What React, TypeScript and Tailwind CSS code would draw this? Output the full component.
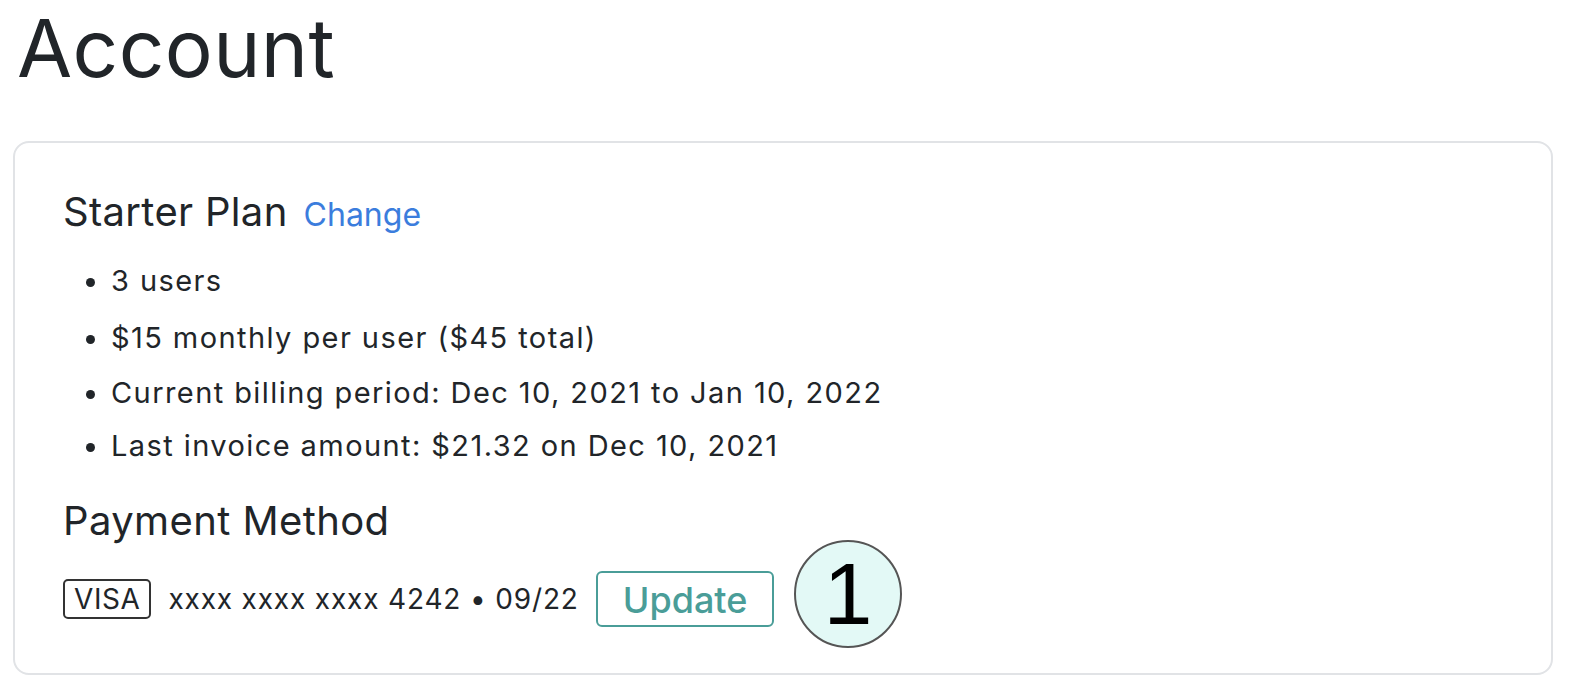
const items = [
  { text: "3 users", gap: "" },
  { text: "$15 monthly per user ($45 total)", gap: "mt-[15px]" },
  { text: "Current billing period: Dec 10, 2021 to Jan 10, 2022", gap: "mt-[13px]" },
  { text: "Last invoice amount: $21.32 on Dec 10, 2021", gap: "mt-[11px]" },
];

export default function App() {
  return (
    <div className="min-h-screen bg-white pl-[13px] pr-[19px] text-[#212529] font-['Inter','Noto_Sans',sans-serif]">
      <h1 className="pl-[4px] text-[80px] leading-[96px] font-normal tracking-[0.005em]">Account</h1>

      <div className="relative mt-[45px] rounded-[16px] border-2 border-[#e1e3e6] px-[48px] pt-[45px] pb-[46px]">
        <div className="flex items-baseline">
          <h2 className="text-[40px] leading-[48px] tracking-[0.008em]">Starter Plan</h2>
          <a href="#" className="ml-[16px] text-[32px] text-[#3b7ddd]">
            Change
          </a>
        </div>

        <ul className="mt-[21px] list-disc pl-[48px] text-[29px] leading-[42px] tracking-[0.049em]">
          {items.map((item) => (
            <li key={item.text} className={item.gap}>
              {item.text}
            </li>
          ))}
        </ul>

        <h2 className="mt-[30px] text-[40px] leading-[48px] tracking-[0.01em]">Payment Method</h2>

        <div className="mt-[26px] flex items-center gap-[17px]">
          <span className="flex h-[40px] items-center rounded-[5px] border-2 border-[#333] px-[9px] text-[28px] tracking-[0.02em]">
            VISA
          </span>
          <span className="text-[28px] tracking-[0.03em]">xxxx xxxx xxxx 4242 • 09/22</span>
          <button className="h-[56px] rounded-[6px] border-2 border-[#4a9d98] px-[25px] text-[36px] font-medium text-[#4a9d98]">
            Update
          </button>
        </div>

        <div className="absolute left-[779px] top-[397px] flex h-[108px] w-[108px] items-center justify-center rounded-full border-2 border-[#555] bg-[#e3f9f6] font-['Liberation_Sans',Arial,sans-serif] text-[88px] leading-none text-black">
          1
        </div>
      </div>
    </div>
  );
}
